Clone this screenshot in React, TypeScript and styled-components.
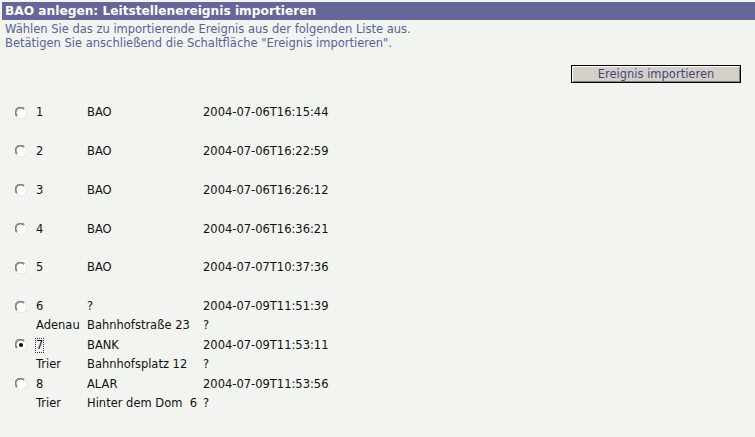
import { FC, Fragment, useState } from "react";
import styled, { createGlobalStyle } from "styled-components";

interface IEvent {
    id: string;
    name: string;
    date: string;
    city?: string;
    street?: string;
    extra?: string;
}

const events: IEvent[] = [
    { id: "1", name: "BAO", date: "2004-07-06T16:15:44" },
    { id: "2", name: "BAO", date: "2004-07-06T16:22:59" },
    { id: "3", name: "BAO", date: "2004-07-06T16:26:12" },
    { id: "4", name: "BAO", date: "2004-07-06T16:36:21" },
    { id: "5", name: "BAO", date: "2004-07-07T10:37:36" },
    { id: "6", name: "?", date: "2004-07-09T11:51:39", city: "Adenau", street: "Bahnhofstraße 23", extra: "?" },
    { id: "7", name: "BANK", date: "2004-07-09T11:53:11", city: "Trier", street: "Bahnhofsplatz 12", extra: "?" },
    { id: "8", name: "ALAR", date: "2004-07-09T11:53:56", city: "Trier", street: "Hinter dem Dom  6", extra: "?" },
];

const GlobalStyle = createGlobalStyle`
  body {
    margin: 0;
    background: #f2f4f0;
    font-family: "DejaVu Sans", Verdana, sans-serif;
    font-size: 11.5px;
  }
`;

const Page = styled.div`
  padding: 2px 0 0 2px;
  min-height: 435px;
`;

const TitleBar = styled.h1`
  margin: 0;
  height: 18px;
  line-height: 18px;
  padding-left: 3px;
  background: #666699;
  color: #ffffff;
  font-size: 12.2px;
  font-weight: bold;
`;

const Intro = styled.p`
  margin: 2px 0 0 3px;
  color: #55639b;
  line-height: 14px;
`;

const ButtonRow = styled.div`
  display: flex;
  justify-content: flex-end;
  padding: 15px 14px 0 0;
`;

const ImportButton = styled.button`
  width: 170px;
  height: 18px;
  padding: 0;
  background: #d4d0c8;
  border: 1px solid #000;
  box-shadow: inset 1px 1px 0 #ffffff, inset -1px -1px 0 #808080;
  color: #46467e;
  font-family: "DejaVu Sans", Verdana, sans-serif;
  font-size: 11.5px;
  cursor: pointer;
`;

const List = styled.div`
  display: grid;
  grid-template-columns: 21px 51px 116px auto;
  grid-auto-rows: 19.4px;
  align-items: center;
  padding: 20px 0 0 13px;
  color: #111;
`;

const Cell = styled.span<{ $focus?: boolean }>`
  white-space: pre;
  outline: ${(p) => (p.$focus ? "1px dotted #333" : "none")};
  justify-self: start;
  line-height: 13px;
`;

const RadioBox = styled.span`
  display: flex;
  align-items: center;
  cursor: pointer;
`;

const Radio: FC<{ checked: boolean; onClick: () => void }> = ({ checked, onClick }) => (
    <RadioBox onClick={onClick}>
        <svg width="12" height="12" viewBox="0 0 12 12">
            <circle cx="6" cy="6" r="5.5" fill="#ffffff" />
            <path d="M1.5 9.5 A5 5 0 0 1 9.5 1.5" fill="none" stroke="#808080" strokeWidth="1" />
            <path d="M2.2 8.8 A4 4 0 0 1 8.8 2.2" fill="none" stroke="#404040" strokeWidth="1" />
            <path d="M10.5 2.5 A5 5 0 0 1 2.5 10.5" fill="none" stroke="#e0e0dc" strokeWidth="1" />
            {checked && <circle cx="6" cy="6" r="2" fill="#000" />}
        </svg>
    </RadioBox>
);

const App: FC = () => {
    const [selected, setSelected] = useState("7");

    return (
        <>
            <GlobalStyle />
            <Page>
                <TitleBar>BAO anlegen: Leitstellenereignis importieren</TitleBar>
                <Intro>
                    Wählen Sie das zu importierende Ereignis aus der folgenden Liste aus.
                    <br />
                    Betätigen Sie anschließend die Schaltfläche "Ereignis importieren".
                </Intro>
                <ButtonRow>
                    <ImportButton>Ereignis importieren</ImportButton>
                </ButtonRow>
                <List>
                    {events.map((ev) => (
                        <Fragment key={ev.id}>
                            <Radio checked={selected === ev.id} onClick={() => setSelected(ev.id)} />
                            <Cell $focus={selected === ev.id}>{ev.id}</Cell>
                            <Cell>{ev.name}</Cell>
                            <Cell>{ev.date}</Cell>
                            <span />
                            <Cell>{ev.city ?? ""}</Cell>
                            <Cell>{ev.street ?? ""}</Cell>
                            <Cell>{ev.extra ?? ""}</Cell>
                        </Fragment>
                    ))}
                </List>
            </Page>
        </>
    );
};

export default App;
